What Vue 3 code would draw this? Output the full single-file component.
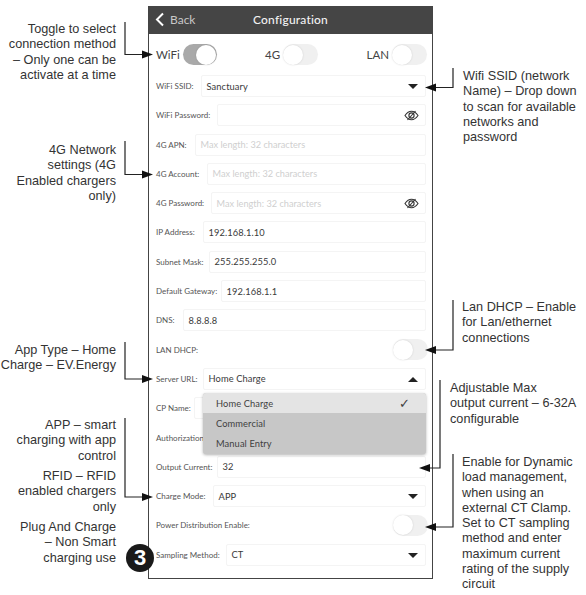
<script setup>
const rows = [
  { label: 'WiFi SSID:', left: 45, value: 'Sanctuary', caret: 'down' },
  { label: 'WiFi Password:', left: 61, eye: true },
  { label: '4G APN:', left: 39, placeholder: 'Max length: 32 characters' },
  { label: '4G Account:', left: 51, placeholder: 'Max length: 32 characters' },
  { label: '4G Password:', left: 55, placeholder: 'Max length: 32 characters', eye: true },
  { label: 'IP Address:', left: 47, value: '192.168.1.10' },
  { label: 'Subnet Mask:', left: 53, value: '255.255.255.0' },
  { label: 'Default Gateway:', left: 65, value: '192.168.1.1' },
  { label: 'DNS:', left: 27, value: '8.8.8.8' },
  { label: 'LAN DHCP:', toggle: true },
  { label: 'Server URL:', left: 47, value: 'Home Charge', caret: 'up', menu: true },
  { label: 'CP Name:', left: 38 },
  { label: 'Authorization Key:', left: 72 },
  { label: 'Output Current:', left: 61, value: '32' },
  { label: 'Charge Mode:', left: 57, value: 'APP', caret: 'down' },
  { label: 'Power Distribution Enable:', toggle: true },
  { label: 'Sampling Method:', left: 70, value: 'CT', caret: 'down' }
]
const menuItems = ['Home Charge', 'Commercial', 'Manual Entry']
const modes = [
  { name: 'WiFi', on: true },
  { name: '4G', on: false },
  { name: 'LAN', on: false }
]
const leaders = [
  'M125 22V54.5H144',
  'M125 141V174.5H144',
  'M125 342V379H144',
  'M125 418V497H144',
  'M453 68V87.5H435',
  'M453 300V350H435',
  'M440 380V468H429',
  'M453 454V527H435'
]
const heads = [
  '142,50.5 142,58.5 153,54.5',
  '142,170.5 142,178.5 153,174.5',
  '142,375 142,383 153,379',
  '142,493 142,501 153,497',
  '436,83.5 436,91.5 425,87.5',
  '436,346 436,354 425,350',
  '430,464 430,472 419,468',
  '436,523 436,531 425,527'
]
</script>

<template>
  <div class="canvas">
    <div class="phone">
      <header class="bar">
        <svg class="chev" width="10" height="15" viewBox="0 0 10 15">
          <path d="M8 1.5 2 7.5l6 6" fill="none" stroke="#fff" stroke-width="2" />
        </svg>
        <span class="back">Back</span>
        <span class="title">Configuration</span>
      </header>

      <div class="modes">
        <div v-for="m in modes" :key="m.name" class="mode">
          <span class="mode-name">{{ m.name }}</span>
          <span class="switch" :class="{ on: m.on }"><i class="knob"></i></span>
        </div>
      </div>

      <div class="rows">
        <div v-for="r in rows" :key="r.label" class="row">
          <span class="label" :style="r.left ? { width: r.left + 'px' } : null">{{ r.label }}</span>
          <span v-if="r.toggle" class="switch push"><i class="knob"></i></span>
          <div v-else class="box">
            <span v-if="r.value" class="value">{{ r.value }}</span>
            <span v-if="r.placeholder" class="ph">{{ r.placeholder }}</span>
            <i v-if="r.caret" class="caret" :class="r.caret"></i>
            <svg v-if="r.eye" class="eye" width="15" height="11" viewBox="0 0 15 11">
              <path d="M1 5.5C3 2.6 5 1.3 7.5 1.3S12 2.6 14 5.5C12 8.4 10 9.7 7.5 9.7S3 8.4 1 5.5Z" fill="none" stroke="#333" stroke-width="1.1" />
              <circle cx="7.5" cy="5.5" r="2.6" fill="none" stroke="#333" stroke-width="1.1" />
              <path d="M3.5 10 11.5 1" fill="none" stroke="#333" stroke-width="1.1" />
            </svg>
            <div v-if="r.menu" class="menu">
              <div v-for="(item, i) in menuItems" :key="item" class="menu-item" :class="{ sel: i === 0 }">
                <span>{{ item }}</span>
                <span v-if="i === 0" class="check">✓</span>
              </div>
            </div>
          </div>
        </div>
      </div>
    </div>

    <p class="note n-left n1">Toggle to select<br />connection method<br />– Only one can be<br />activate at a time</p>
    <p class="note n-left n2">4G Network<br />settings (4G<br />Enabled chargers<br />only)</p>
    <p class="note n-left n3">App Type – Home<br />Charge – EV.Energy</p>
    <div class="note n-left n4">
      <p>APP – smart<br />charging with app<br />control</p>
      <p>RFID – RFID<br />enabled chargers<br />only</p>
      <p>Plug And Charge<br />– Non Smart<br />charging use</p>
    </div>
    <p class="note n5">Wifi SSID (network<br />Name) – Drop down<br />to scan for available<br />networks and<br />password</p>
    <p class="note n6">Lan DHCP – Enable<br />for Lan/ethernet<br />connections</p>
    <p class="note n7">Adjustable Max<br />output current – 6-32A<br />configurable</p>
    <p class="note n8">Enable for Dynamic<br />load management,<br />when using an<br />external CT Clamp.<br />Set to CT sampling<br />method and enter<br />maximum current<br />rating of the supply<br />circuit</p>

    <svg class="leaders" width="586" height="595" viewBox="0 0 586 595">
      <path v-for="d in leaders" :key="d" :d="d" fill="none" stroke="#222" stroke-width="1.2" />
      <polygon v-for="p in heads" :key="p" :points="p" fill="#111" />
    </svg>

    <div class="badge">3</div>
  </div>
</template>

<style scoped>
.canvas {
  position: relative;
  width: 586px;
  height: 595px;
  background: #fff;
  overflow: hidden;
}
.phone {
  position: absolute;
  left: 148px;
  top: 6px;
  width: 285px;
  height: 573px;
  box-sizing: border-box;
  border: 1px solid #444;
  background: #fff;
  font-family: Lato, "Open Sans", sans-serif;
}
.bar {
  position: relative;
  display: flex;
  align-items: center;
  box-sizing: border-box;
  height: 28px;
  margin-top: -1px;
  padding: 0 0 2px 6px;
  background: #454545;
}
.back {
  margin-left: 5px;
  font-size: 12px;
  color: #c8c8c8;
}
.title {
  position: absolute;
  left: 0;
  right: 0;
  text-align: center;
  font-size: 12px;
  font-weight: 500;
  letter-spacing: 0.2px;
  color: #f2f2f2;
}
.modes {
  display: flex;
  justify-content: space-between;
  margin: 10px 5px 10px 7px;
  height: 21px;
}
.mode {
  display: flex;
  align-items: center;
  gap: 3px;
}
.mode-name {
  font-size: 11.5px;
  color: #444;
}
.switch {
  display: flex;
  justify-content: flex-start;
  align-items: center;
  width: 35px;
  height: 21px;
  border-radius: 11px;
  background: #f0f0f0;
}
.switch.on {
  justify-content: flex-end;
  background: #a9a9a9;
  padding-right: 1px;
  width: 34px;
  box-sizing: border-box;
}
.knob {
  display: block;
  width: 20px;
  height: 20px;
  border-radius: 50%;
  background: #fff;
  box-shadow: 0 0 2px rgba(0, 0, 0, 0.15);
}
.rows {
  display: flex;
  flex-direction: column;
  gap: 7.3px;
  padding: 0 6px 0 7px;
}
.row {
  display: flex;
  align-items: center;
  height: 22px;
}
.label {
  flex: none;
  font-size: 8px;
  color: #555;
  white-space: nowrap;
}
.push {
  margin-left: auto;
  margin-right: -2px;
}
.box {
  position: relative;
  flex: 1;
  display: flex;
  align-items: center;
  height: 22px;
  box-sizing: border-box;
  padding: 0 5px 0 4.5px;
  border: 1px solid #f4f4f4;
  border-radius: 2px;
}
.value {
  font-size: 9.3px;
  letter-spacing: 0.1px;
  color: #3a3a3a;
}
.ph {
  font-size: 9.2px;
  color: #cfcfcf;
}
.caret {
  position: absolute;
  right: 7px;
  top: 8px;
  width: 0;
  height: 0;
  border-left: 5px solid transparent;
  border-right: 5px solid transparent;
}
.caret.down {
  border-top: 5px solid #222;
}
.caret.up {
  border-bottom: 5px solid #222;
}
.eye {
  position: absolute;
  right: 6px;
  top: 5px;
}
.menu {
  position: absolute;
  z-index: 5;
  left: -1px;
  right: -1px;
  top: 24px;
  border-radius: 3px;
  background: #c7c7c7;
  box-shadow: 0 1px 3px rgba(0, 0, 0, 0.3);
  overflow: hidden;
}
.menu-item {
  display: flex;
  justify-content: space-between;
  align-items: center;
  height: 20.3px;
  padding: 0 16px 0 13px;
  font-size: 9.3px;
  letter-spacing: 0.1px;
  color: #3f3f3f;
}
.menu-item.sel {
  background: #e4e4e4;
}
.check {
  font-family: "DejaVu Sans", sans-serif;
  font-size: 13px;
}
.note {
  position: absolute;
  margin: 0;
  font-family: "Liberation Sans", Arial, sans-serif;
  font-size: 12.7px;
  line-height: 15.3px;
  color: #333;
  white-space: nowrap;
}
.note p {
  margin: 0 0 5.2px;
}
.n-left {
  right: 470px;
  text-align: right;
}
.n1 { top: 22px; }
.n2 { top: 143px; }
.n3 { top: 343px; }
.n4 { top: 418px; }
.n5 { left: 463px; top: 69px; }
.n6 { left: 462px; top: 300px; }
.n7 { left: 450px; top: 381px; }
.n8 { left: 462px; top: 455px; }
.leaders {
  position: absolute;
  left: 0;
  top: 0;
  z-index: 10;
  pointer-events: none;
}
.badge {
  position: absolute;
  z-index: 11;
  left: 126px;
  top: 544px;
  width: 28px;
  height: 28px;
  border-radius: 50%;
  background: #1a1a1a;
  color: #fff;
  font-family: "Liberation Sans", Arial, sans-serif;
  font-size: 22px;
  font-weight: 700;
  line-height: 28px;
  text-align: center;
}
</style>
